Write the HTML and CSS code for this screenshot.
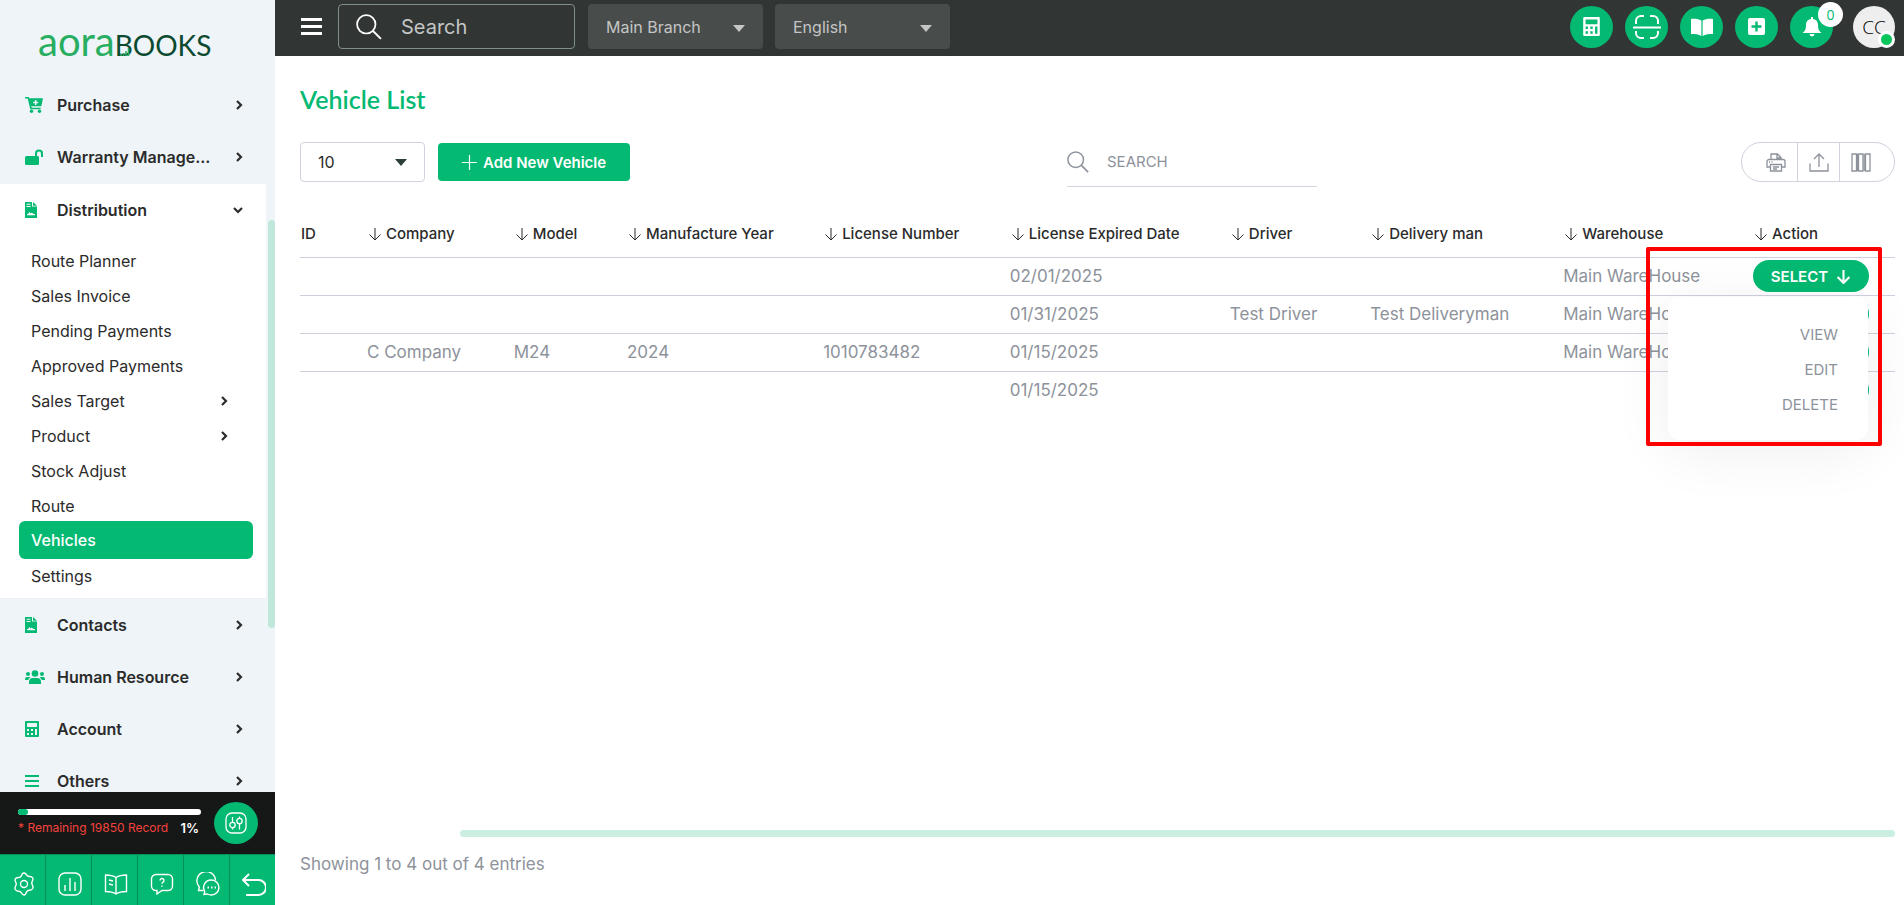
FILE: index.html
```html
<!DOCTYPE html>
<html lang="en">
<head>
  <meta charset="UTF-8">
  <title>Vehicle List | aoraBOOKS</title>
  <link rel="stylesheet" href="styles.css">
</head>
<body>
  <svg class="sprite" aria-hidden="true">
    <symbol id="chevron" viewBox="0 0 10 10"><path d="M3 1l4 4-4 4" fill="none" stroke="currentColor" stroke-width="2.2"/></symbol>
    <symbol id="arrow" viewBox="0 0 14 14"><path d="M7 1v12M1.500 7.500L7 13l5.500-5.500" fill="none" stroke="currentColor"/></symbol>
    <symbol id="lens" viewBox="0 0 24 24"><circle cx="9.500" cy="9.500" r="8.500" fill="none" stroke="currentColor" stroke-width="1.600"/><path d="M15.500 15.500L23 23" stroke="currentColor" stroke-width="1.800"/></symbol>
    <symbol id="invoice" viewBox="0 0 12 16"><path fill="currentColor" fill-rule="evenodd" d="M0 0h7v4.500h5V16H0zM1.500 1.800v1h4v-1zM1.500 4v1h4V4zM2 13.200h8v-1.200H8.500L6.800 10.600l-1 .9-1.300-1.500-1.500 2H2z"/><path fill="currentColor" d="M8 0l4 3.700H8z"/></symbol>
    <symbol id="calc" viewBox="0 0 14 16"><path fill="currentColor" fill-rule="evenodd" d="M1 0h12a1 1 0 0 1 1 1v14a1 1 0 0 1-1 1H1a1 1 0 0 1-1-1V1a1 1 0 0 1 1-1zM2 2v4h10V2zM2 8v2h2V8zM6 8v2h2V8zM2 12v2h2v-2zM6 12v2h2v-2zM10 8v6h2V8z"/></symbol>
  </svg>

  <div class="app">
    <aside class="sidebar">
      <a class="logo" href="#"><span class="logo-aora">aora</span><span class="logo-books">BOOKS</span>
        <svg class="logo-bars" viewBox="0 0 10 8"><path d="M1 8V6M3.500 8V5M6 8V3M8.500 8V0" stroke="#27ae60" stroke-width="1.500"/></svg>
      </a>

      <nav class="menu">
        <a class="menu-item" href="#">
          <svg class="menu-icon" viewBox="0 0 18 16"><path fill="currentColor" fill-rule="evenodd" d="M0 0h3.800l.4 1.300H18l-1.700 8H6.300l.3 1.400h9v1.500H5.300L2.700 1.500H0zM10 3v1.800H8.200v1.400H10V8h1.400V6.200h1.800V4.800h-1.800V3z"/><circle cx="6.500" cy="14.300" r="1.700" fill="currentColor"/><circle cx="14.500" cy="14.300" r="1.700" fill="currentColor"/></svg>
          <span>Purchase</span><svg class="chevron"><use href="#chevron"/></svg>
        </a>
        <a class="menu-item" href="#">
          <svg class="menu-icon" viewBox="0 0 18 16"><rect y="7" width="14" height="9" rx="1.500" fill="currentColor"/><path d="M11 7.500V4.500a3 3 0 0 1 6 0V8" fill="none" stroke="currentColor" stroke-width="2"/></svg>
          <span>Warranty Manage...</span><svg class="chevron"><use href="#chevron"/></svg>
        </a>
        <div class="menu-open">
          <a class="menu-item" href="#">
            <svg class="menu-icon menu-icon-narrow"><use href="#invoice"/></svg>
            <span>Distribution</span><svg class="chevron chevron-down"><use href="#chevron"/></svg>
          </a>
          <div class="submenu">
            <a href="#">Route Planner</a>
            <a href="#">Sales Invoice</a>
            <a href="#">Pending Payments</a>
            <a href="#">Approved Payments</a>
            <a href="#">Sales Target<svg class="chevron"><use href="#chevron"/></svg></a>
            <a href="#">Product<svg class="chevron"><use href="#chevron"/></svg></a>
            <a href="#">Stock Adjust</a>
            <a href="#">Route</a>
            <a class="active" href="#">Vehicles</a>
            <a href="#">Settings</a>
          </div>
        </div>
        <a class="menu-item" href="#">
          <svg class="menu-icon menu-icon-narrow"><use href="#invoice"/></svg>
          <span>Contacts</span><svg class="chevron"><use href="#chevron"/></svg>
        </a>
        <a class="menu-item" href="#">
          <svg class="menu-icon menu-icon-wide" viewBox="0 0 20 14"><g fill="currentColor"><circle cx="10" cy="3.500" r="3.300"/><circle cx="3" cy="4" r="2"/><circle cx="17" cy="4" r="2"/><path d="M4 14v-2a4 4 0 0 1 4-4h4a4 4 0 0 1 4 4v2zM0 10V9a2 2 0 0 1 2-2h2.500l.8.500A6 6 0 0 0 3.200 10zM20 10V9a2 2 0 0 0-2-2h-2.500l-.8.500a6 6 0 0 1 2.100 2.500z"/></g></svg>
          <span>Human Resource</span><svg class="chevron"><use href="#chevron"/></svg>
        </a>
        <a class="menu-item" href="#">
          <svg class="menu-icon menu-icon-mid"><use href="#calc"/></svg>
          <span>Account</span><svg class="chevron"><use href="#chevron"/></svg>
        </a>
        <a class="menu-item" href="#">
          <svg class="menu-icon menu-icon-mid" viewBox="0 0 14 14"><path d="M0 2h14M0 7h14M0 12h14" stroke="currentColor" stroke-width="2"/></svg>
          <span>Others</span><svg class="chevron"><use href="#chevron"/></svg>
        </a>
        <div class="menu-thumb"></div>
      </nav>

      <div class="usage">
        <div class="usage-info">
          <div class="usage-bar"><div class="usage-fill"></div></div>
          <div class="usage-text"><span>* Remaining 19850 Record</span><b>1%</b></div>
        </div>
        <button class="usage-btn" aria-label="Preferences">
          <svg width="22" height="22" viewBox="0 0 22 22" fill="none" stroke="#fff" stroke-width="1.300"><rect x="1" y="1" width="20" height="20" rx="6"/><path d="M7.500 5v5M7.500 16v1.500M14.500 4.500v1.500M14.500 12v5.500"/><circle cx="7.500" cy="13" r="2.700"/><circle cx="14.500" cy="9" r="2.700"/></svg>
        </button>
      </div>

      <div class="quick">
        <button aria-label="Settings"><svg viewBox="0 0 24 24"><path d="M12 1c1.500 0 2 .8 2.600 1.900.7 1.200 1.700 1.700 3.100 1.600 1.300 0 2.200.1 3 1.400.7 1.300.3 2.100-.4 3.200-.8 1.200-.8 2.600 0 3.800.7 1.100 1.100 2.300.4 3.600-.8 1.300-1.700 1.800-3 1.700-1.400-.1-2.400.4-3.100 1.600C14 21.900 13.500 23 12 23s-2-1.100-2.600-2.200c-.7-1.200-1.700-1.700-3.100-1.600-1.300.1-2.200-.4-3-1.700-.7-1.300-.3-2.500.4-3.600.8-1.200.8-2.600 0-3.800-.7-1.100-1.100-1.900-.4-3.200.8-1.300 1.700-1.400 3-1.400 1.400.1 2.400-.4 3.100-1.600C10 1.800 10.500 1 12 1z"/><circle cx="12" cy="12" r="3.500"/></svg></button>
        <button aria-label="Reports"><svg viewBox="0 0 24 24"><rect x="1" y="1" width="22" height="22" rx="6"/><path d="M7 13v6M12 6v13M17 10v9"/></svg></button>
        <button aria-label="Ledger"><svg viewBox="0 0 24 24"><path d="M12 5.500C9 3.500 5.500 3 1.500 3v16.500c4 0 7.500.5 10.500 2.500 3-2 6.500-2.500 10.500-2.500V3c-4 0-7.500.500-10.500 2.500zM12 5.500V22M5 8l4 1M5 12l4 1"/></svg></button>
        <button aria-label="Help"><svg viewBox="0 0 24 24"><path d="M6 2.500h12a4.500 4.500 0 0 1 4.500 4.500v7a4.500 4.500 0 0 1-4.500 4.500h-6L7 22v-3.500H6A4.500 4.500 0 0 1 1.500 14V7A4.500 4.500 0 0 1 6 2.500z"/><path d="M10 8.500a2 2 0 1 1 3 1.700c-.7.400-1 .8-1 1.500M12 13.500v1.200"/></svg></button>
        <button aria-label="Chat"><svg viewBox="0 0 24 24"><path d="M7.500 18.500H2.500l.8-3.500A9.300 9.300 0 1 1 19.500 8"/><path d="M15.500 8a7.500 7.500 0 1 1-.1 15c-1.600 0-3-.3-4-1L8 22.500l.8-3A7.500 7.500 0 0 1 15.500 8z"/><path d="M11.500 15.500h1.500M15 15.500h1.500M18.500 15.500H20" stroke-width="2"/></svg></button>
        <button aria-label="Back"><svg viewBox="0 0 24 24" class="bold"><path d="M7 2L1 8l6 6M1 8h15.500a6.500 6.500 0 0 1 0 15H4"/></svg></button>
      </div>
    </aside>

    <div class="page">
      <header class="topbar">
        <button class="burger" aria-label="Toggle menu"><i></i><i></i><i></i></button>
        <label class="top-search">
          <svg width="28" height="26"><use href="#lens"/></svg>
          <input type="text" placeholder="Search" aria-label="Search">
        </label>
        <div class="select select-dark"><select aria-label="Branch"><option>Main Branch</option></select></div>
        <div class="select select-dark"><select aria-label="Language"><option>English</option></select></div>

        <div class="top-actions">
          <button aria-label="Calculator"><svg width="17" height="19"><use href="#calc"/></svg></button>
          <button aria-label="Scan"><svg width="30" height="26" viewBox="0 0 30 26" fill="none" stroke="#fff" stroke-width="2"><path d="M4 10V7a5 5 0 0 1 5-5h3M18 2h3a5 5 0 0 1 5 5v3M26 17v2a5 5 0 0 1-5 5h-3M12 24H9a5 5 0 0 1-5-5v-2M1 13.500h28"/></svg></button>
          <button aria-label="Journal"><svg width="24" height="18" viewBox="0 0 24 18" fill="#fff"><path d="M1 1c4-.5 7.500 0 10.400 1.500V18C8.500 16.300 5 16 1 16zM23 1c-4-.5-7.500 0-10.400 1.500V18C15.500 16.300 19 16 23 16z"/></svg></button>
          <button aria-label="Add"><svg width="17" height="17" viewBox="0 0 17 17"><rect width="17" height="17" rx="2" fill="#fff"/><path d="M8.500 3.500v10M3.500 8.500h10" stroke="#04b972" stroke-width="2.400"/></svg></button>
          <button aria-label="Notifications"><svg width="18" height="20" viewBox="0 0 18 20" fill="#fff"><path d="M8 0h2v2c3.500.5 5 3 5 6 0 4 1 6 3 7.500V16H0v-.5C2 14 3 12 3 8c0-3 1.500-5.500 5-6zM6.500 17h5a2.500 2.500 0 0 1-5 0z"/></svg><span class="badge">0</span></button>
          <button class="avatar">CC<span class="online"></span></button>
        </div>
      </header>

      <main class="content">
        <h1>Vehicle List</h1>

        <div class="toolbar">
          <div class="toolbar-left">
            <div class="select"><select aria-label="Rows per page"><option>10</option></select></div>
            <button class="add-btn"><svg width="15" height="15" viewBox="0 0 15 15"><path d="M7.500 0v15M0 7.500h15" stroke="#fff" stroke-width="1.200"/></svg>Add New Vehicle</button>
          </div>
          <label class="search">
            <svg width="22" height="22"><use href="#lens"/></svg>
            <input type="text" placeholder="SEARCH" aria-label="Search vehicles">
          </label>
          <div class="export">
            <button aria-label="Print"><svg width="20" height="19" viewBox="0 0 20 19"><path d="M5 6.500V1h6.500L15 4.500v2M11 1v4h4M4 14H1V8.500a2 2 0 0 1 2-2h14a2 2 0 0 1 2 2V14h-3M4.500 11.500h11V18h-11zM7 14h6M7 16h4M3 9h1M5.500 9h1"/></svg></button>
            <button aria-label="Export"><svg width="20" height="19" viewBox="0 0 20 19"><path d="M1 10.500V18h18v-7.500M10 14V1M5 6l5-5 5 5"/></svg></button>
            <button aria-label="Columns"><svg width="20" height="19" viewBox="0 0 20 19"><path d="M1 1h4.500v17H1zM7.500 1H12v17H7.500zM14.500 1H19v17h-4.500z"/><path d="M6.500 1v17M13.200 1v17"/></svg></button>
          </div>
        </div>

        <div class="table-wrap">
          <table>
            <thead>
              <tr>
                <th class="c-id">ID</th>
                <th class="c-company"><svg><use href="#arrow"/></svg>Company</th>
                <th class="c-model"><svg><use href="#arrow"/></svg>Model</th>
                <th class="c-year"><svg><use href="#arrow"/></svg>Manufacture Year</th>
                <th class="c-license"><svg><use href="#arrow"/></svg>License Number</th>
                <th class="c-expired"><svg><use href="#arrow"/></svg>License Expired Date</th>
                <th class="c-driver"><svg><use href="#arrow"/></svg>Driver</th>
                <th class="c-delivery"><svg><use href="#arrow"/></svg>Delivery man</th>
                <th class="c-warehouse"><svg><use href="#arrow"/></svg>Warehouse</th>
                <th><svg><use href="#arrow"/></svg>Action</th>
              </tr>
            </thead>
            <tbody>
              <tr>
                <td></td><td></td><td></td><td></td><td></td><td>02/01/2025</td><td></td><td></td><td>Main WareHouse</td>
                <td>
                  <div class="action">
                    <button class="select-btn">SELECT<svg><use href="#arrow"/></svg></button>
                    <div class="dropdown">
                      <a href="#">VIEW</a>
                      <a href="#">EDIT</a>
                      <a href="#">DELETE</a>
                    </div>
                    <div class="highlight"></div>
                  </div>
                </td>
              </tr>
              <tr>
                <td></td><td></td><td></td><td></td><td></td><td>01/31/2025</td><td>Test Driver</td><td>Test Deliveryman</td><td>Main WareHouse</td>
                <td><button class="select-btn">SELECT<svg><use href="#arrow"/></svg></button></td>
              </tr>
              <tr>
                <td></td><td>C Company</td><td>M24</td><td>2024</td><td>1010783482</td><td>01/15/2025</td><td></td><td></td><td>Main WareHouse</td>
                <td><button class="select-btn">SELECT<svg><use href="#arrow"/></svg></button></td>
              </tr>
              <tr>
                <td></td><td></td><td></td><td></td><td></td><td>01/15/2025</td><td></td><td></td><td></td>
                <td><button class="select-btn">SELECT<svg><use href="#arrow"/></svg></button></td>
              </tr>
            </tbody>
          </table>
        </div>

        <div class="table-thumb"></div>
        <p class="entries">Showing 1 to 4 out of 4 entries</p>
      </main>
    </div>
  </div>
</body>
</html>
```
FILE: styles.css
```css
* {
  box-sizing: border-box;
}
body {
  margin: 0;
  font-family: Inter, "Liberation Sans", sans-serif;
  font-size: 16px;
  color: #2b2b2b;
  background: #fff;
}
a {
  color: inherit;
  text-decoration: none;
}
button, input, select {
  font: inherit;
  color: inherit;
  border: none;
  background: none;
  padding: 0;
  margin: 0;
}
button {
  cursor: pointer;
}
input::placeholder {
  color: inherit;
  opacity: 1;
}
.sprite {
  display: none;
}
.app {
  display: flex;
  height: 100vh;
  overflow: hidden;
}

/* sidebar */
.sidebar {
  width: 275px;
  flex: none;
  display: flex;
  flex-direction: column;
  background: #eef4f8;
}
.logo {
  position: relative;
  display: flex;
  align-items: baseline;
  height: 79px;
  flex: none;
  padding: 16px 0 0 38px;
  font-family: Lato, sans-serif;
  line-height: 50px;
}
.logo-aora {
  font-size: 40px;
  color: #27ae60;
}
.logo-books {
  font-size: 28px;
  color: #0b4a30;
}
.logo-bars {
  position: absolute;
  left: 120px;
  top: 48px;
  width: 10px;
  height: 8px;
}
.menu {
  position: relative;
  flex: 1;
  min-height: 0;
  overflow: hidden;
}
.menu-item {
  display: flex;
  align-items: center;
  height: 52px;
  padding: 0 31px 0 25px;
  font-weight: 600;
}
.menu-item span {
  flex: 1;
  white-space: nowrap;
}
.menu-icon {
  width: 18px;
  height: 16px;
  margin-right: 14px;
  color: #04b972;
}
.menu-icon-wide {
  width: 20px;
  margin-right: 12px;
}
.menu-icon-mid {
  width: 14px;
  margin-right: 18px;
}
.menu-icon-narrow {
  width: 12px;
  margin-right: 20px;
}
.chevron {
  width: 10px;
  height: 10px;
}
.chevron-down {
  transform: rotate(90deg);
}
.menu-open {
  width: 266px;
  background: #fff;
  border-top: 1px solid #eef4f8;
  border-bottom: 1px solid #eef0f3;
}
.menu-open .menu-item {
  padding-right: 23px;
}
.submenu {
  padding: 7px 13px 5px 19px;
}
.submenu a {
  display: flex;
  align-items: center;
  justify-content: space-between;
  height: 35px;
  padding: 0 24px 0 12px;
}
.submenu .active {
  height: 38px;
  margin: -2px 0 -1px;
  border-radius: 6px;
  background: #04b972;
  color: #fff;
  font-weight: 500;
}
.menu-thumb {
  position: absolute;
  right: 0;
  top: 141px;
  width: 7px;
  height: 408px;
  border-radius: 4px;
  background: #bfe8da;
}
.usage {
  display: flex;
  align-items: center;
  gap: 13px;
  height: 62px;
  flex: none;
  padding: 0 17px 0 18px;
  background: #161817;
}
.usage-info {
  flex: 1;
  min-width: 0;
}
.usage-bar {
  height: 6px;
  border-radius: 3px;
  background: #fff;
}
.usage-fill {
  width: 10px;
  height: 6px;
  border-radius: 3px;
  background: #04b972;
}
.usage-text {
  display: flex;
  justify-content: space-between;
  padding: 4px 2px 0 0;
  font-size: 12px;
  line-height: 18px;
  color: #f5433c;
  white-space: nowrap;
}
.usage-text b {
  font-size: 13px;
  font-weight: 600;
  color: #fff;
}
.usage-btn {
  display: grid;
  place-items: center;
  width: 44px;
  height: 42px;
  border-radius: 50%;
  background: #04b972;
}
.quick {
  display: flex;
  height: 51px;
  flex: none;
  background: #04b972;
  border-top: 1px solid #038f59;
}
.quick button {
  flex: 1;
  display: grid;
  place-items: center;
  padding: 8px 0 0 2px;
  border-left: 1px solid #038f59;
}
.quick button:first-child {
  border-left: none;
}
.quick svg {
  width: 24px;
  height: 24px;
  fill: none;
  stroke: #fff;
  stroke-width: 1.4;
}
.quick .bold {
  stroke-width: 2;
}

/* top bar */
.page {
  flex: 1;
  min-width: 0;
  display: flex;
  flex-direction: column;
}
.topbar {
  display: flex;
  align-items: center;
  height: 56px;
  flex: none;
  padding: 0 9px 3px 26px;
  background: #313534;
  color: #c4c6c5;
}
.burger {
  display: flex;
  flex-direction: column;
  gap: 4px;
  width: 21px;
  margin-right: 16px;
}
.burger i {
  height: 3px;
  background: #fff;
}
.top-search {
  display: flex;
  align-items: center;
  width: 237px;
  height: 45px;
  margin-right: 1px;
  padding: 0 16px;
  border: 1px solid #7e9089;
  border-radius: 4px;
  font-size: 20px;
}
.top-search svg {
  flex: none;
  color: #fff;
}
.top-search input {
  width: 100%;
  margin-left: 18px;
}
.select {
  position: relative;
  width: 125px;
}
.select select {
  appearance: none;
  width: 100%;
  height: 40px;
  padding: 0 17px;
  border: 1px solid #d3d0e0;
  border-radius: 4px;
}
.select::after {
  content: "";
  position: absolute;
  right: 18px;
  top: 17px;
  border: 6px solid transparent;
  border-top: 7px solid #2c403a;
  border-bottom: none;
  pointer-events: none;
}
.select-dark {
  width: 175px;
  margin-left: 12px;
}
.select-dark select {
  height: 45px;
  padding: 0 18px;
  border: none;
  background: #484c4b;
}
.select-dark::after {
  top: 21px;
  border-top-color: #c4c6c5;
}
.top-actions {
  display: flex;
  gap: 12px;
  margin-left: auto;
}
.top-actions button {
  position: relative;
  display: grid;
  place-items: center;
  width: 43px;
  height: 42px;
  border-radius: 50%;
  background: #04b972;
  color: #fff;
}
.badge {
  position: absolute;
  left: 28px;
  top: -4px;
  width: 25px;
  height: 25px;
  border-radius: 50%;
  background: #fff;
  color: #04b972;
  font: 14px/25px "Open Sans", sans-serif;
}
.top-actions .avatar {
  width: 42px;
  margin-left: 8px;
  background: #eee;
  color: #000;
  font: 300 19px "Open Sans", sans-serif;
}
.online {
  position: absolute;
  right: 0;
  bottom: 0;
  width: 17px;
  height: 17px;
  border: 3px solid #fff;
  border-radius: 50%;
  background: #08c65b;
}

/* page content */
.content {
  flex: 1;
  min-height: 0;
  display: flex;
  flex-direction: column;
  padding: 26px 9px 0 25px;
}
h1 {
  margin: 0 0 26px;
  font-family: Lato, sans-serif;
  font-size: 25px;
  font-weight: 600;
  line-height: 34px;
  color: #04b972;
}
.toolbar {
  display: flex;
  align-items: center;
  justify-content: space-between;
  height: 40px;
}
.toolbar-left {
  display: flex;
  align-items: center;
  gap: 13px;
  width: 343px;
}
.add-btn {
  display: flex;
  align-items: center;
  gap: 6px;
  height: 38px;
  padding: 0 24px;
  border-radius: 4px;
  background: #04b972;
  color: #fff;
  font-size: 15px;
  font-weight: 600;
  white-space: nowrap;
}
.search {
  display: flex;
  align-items: center;
  width: 250px;
  height: 50px;
  margin: 0 0 0 auto;
  border-bottom: 1px solid #d3d0e0;
  font-size: 15px;
  color: #8d929b;
}
.search input {
  flex: 1;
  width: 100px;
  margin-left: 18px;
}
.export {
  display: flex;
  width: 154px;
  height: 40px;
  margin-left: 424px;
  border: 1px solid #d3d0e0;
  border-radius: 20px;
}
.export button {
  width: 42px;
  border-right: 1px solid #d3d0e0;
}
.export button:first-child {
  width: 56px;
  padding-left: 12px;
}
.export button:last-child {
  flex: 1;
  padding-right: 12px;
  border-right: none;
}
.export svg {
  display: block;
  margin: 0 auto;
  fill: none;
  stroke: #8d929b;
  stroke-width: 1.3;
}

/* vehicle table */
.table-wrap {
  flex: 1;
  padding-top: 26px;
}
table {
  width: 100%;
  table-layout: fixed;
  border-collapse: collapse;
  white-space: nowrap;
}
th, td {
  padding: 0;
  text-align: left;
  border-bottom: 1px solid #d0cfdf;
}
th {
  height: 49px;
  font-size: 15px;
  font-weight: 500;
  padding: 3px 0 0 1px;
}
th svg {
  width: 14px;
  height: 14px;
  margin-right: 4px;
  vertical-align: -2px;
}
td {
  height: 38px;
  font-size: 17px;
  color: #8d929b;
}
tbody tr:last-child td {
  border-bottom: none;
}
.c-id { width: 4.2%; }
.c-company { width: 9.2%; }
.c-model { width: 7.1%; }
.c-year { width: 12.3%; }
.c-license { width: 11.7%; }
.c-expired { width: 13.8%; }
.c-driver { width: 8.8%; }
.c-delivery { width: 12.1%; }
.c-warehouse { width: 11.9%; }
.select-btn {
  display: flex;
  align-items: center;
  justify-content: center;
  gap: 8px;
  width: 116px;
  height: 32px;
  border-radius: 16px;
  background: #04b972;
  color: #fff;
  font-size: 15px;
  font-weight: 600;
}
.select-btn svg {
  width: 15px;
  height: 15px;
  stroke-width: 2;
}
.action {
  position: relative;
  z-index: 1;
  width: 116px;
}
.dropdown {
  position: absolute;
  right: 1px;
  top: 37px;
  width: 200px;
  padding: 20px 30px 18px;
  border-radius: 12px;
  background: #fff;
  box-shadow: 0 10px 60px rgba(0, 0, 0, 0.07);
  font-size: 15px;
  text-align: right;
}
.dropdown a {
  display: block;
  line-height: 35px;
}
.highlight {
  position: absolute;
  right: -13px;
  top: -13px;
  width: 236px;
  height: 199px;
  border: 4px solid #fe0000;
  border-radius: 2px;
  pointer-events: none;
}
.table-thumb {
  width: 90%;
  height: 7px;
  margin-left: auto;
  border-radius: 4px;
  background: #caefe0;
}
.entries {
  margin: 17px 0 31px;
  font-size: 17px;
  line-height: 20px;
  color: #8d929b;
}
```
